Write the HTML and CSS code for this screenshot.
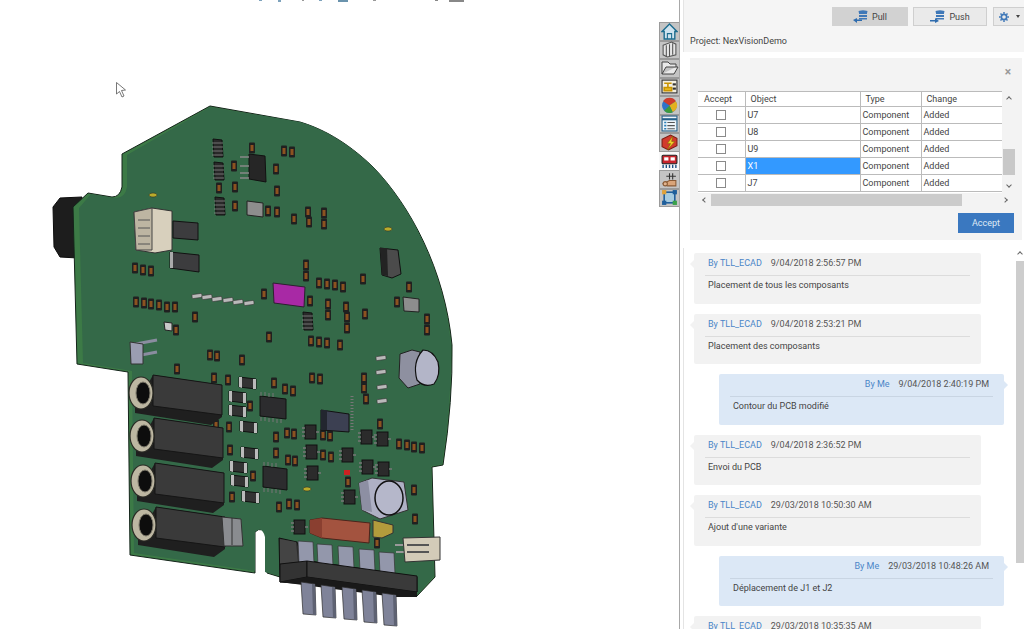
FILE: index.html
```html
<!DOCTYPE html>
<html lang="en">
<head>
    <meta charset="UTF-8">
    <title>NexVision PCB collaboration</title>
    <link rel="stylesheet" href="styles.css">
</head>
<body>
    <div class="viewport">
        <svg class="pcb" viewBox="0 0 659 629" width="659" height="629">
            <defs>
                <g id="r"><rect x="-3" y="-5.5" width="6" height="11" rx="1" fill="#202020"/><rect x="-1.5" y="-3" width="3" height="6" fill="#8c5220"/></g>
                <g id="g"><rect x="-5" y="-2" width="10" height="4" rx="1" transform="rotate(-8)" fill="#b9b9b9" stroke="#333" stroke-width=".6"/></g>
                <g id="s"><polygon points="-8,-6 9,-4 9,6 -8,4" fill="#333" stroke="#111"/><polygon points="-8,-6 -5,-6 -5,5 -8,4" fill="#bbb"/><polygon points="6,-4 9,-4 9,6 6,6" fill="#bbb"/></g>
                <g id="t"><rect x="-6" y="-7" width="11" height="14" fill="#2b2b2b" stroke="#111"/><path d="M-9,-4h3M-9,0h3M-9,4h3M5,0h3" stroke="#777" stroke-width="1.5"/></g>
                <g id="p"><polygon points="-5,-9 4,-8 5,9 -4,9" fill="#292929" stroke="#111"/><path d="M-6,-5h11M-6,-1h11M-6,3h11M-6,7h11" stroke="#888" stroke-width=".8"/></g>
                <g id="jack">
                    <polygon points="-6,14 12,-18 81,-8 81,24 70,32 -6,20" fill="#1f1f1f"/>
                    <polygon points="12,-18 81,-8 81,22 12,13" fill="#3a3a3a" stroke="#151515"/>
                    <ellipse rx="12" ry="16" fill="#bdb7a2" stroke="#2a2a24" stroke-width="1.2"/>
                    <ellipse cx="2" rx="7" ry="11" fill="#0d0d0d" stroke="#7a7668"/>
                </g>
                <g id="up"><polygon points="0,0 15,1 16,22 1,22" fill="#9397ab" stroke="#333" stroke-width=".7"/></g>
                <g id="down"><polygon points="0,0 14,2 15,33 2,32" fill="#7f8399" stroke="#2c2c2c" stroke-width=".7"/><polygon points="11,2 14,2 15,33 12,33" fill="#5e6273"/></g>
            </defs>

            <!-- toolbar remains at the top edge -->
            <g fill="#7ea3bd">
                <rect x="259" y="0" width="3" height="1"/><rect x="278" y="0" width="3" height="2"/><rect x="302" y="0" width="2" height="1" fill="#999"/>
                <rect x="319" y="0" width="3" height="1"/><rect x="338" y="0" width="10" height="2" fill="#6a93ad"/><rect x="373" y="0" width="3" height="1" fill="#999"/>
                <rect x="435" y="0" width="3" height="1" fill="#888"/><rect x="449" y="0" width="15" height="2" fill="#888"/>
            </g>

            <!-- cursor -->
            <path d="M116.5,82.5 V94 L119.5,91.5 L122,97 L124,96 L121.5,90.5 L125.5,90 Z" fill="#fff" stroke="#555" stroke-width=".8"/>

            <!-- cable gland behind the board -->
            <polygon points="53,207 60,198 82,197 78,258 60,257 54,247" fill="#1d1d1d" stroke="#0c0c0c"/>

            <!-- board edge and face -->
            <path d="M210,106 L122,154 V187 Q120,197 112,197 L88,193 L73,207 L77,364 L128,372 L130,555 L255,573 V532 Q262,525 267,537 V573 L280,577 L417,596 L435,577 L432,467 L443,465 Q453,400 452,345 C445,270 410,205 373,167 C345,140 320,128 300,122 Z" fill="#3c7a46" stroke="#14241a"/>
            <path d="M210,107 L127,155 V187 Q125,199 114,198 L91,194 L79,208 L83,363 L132,371 L134,553 L255,571 V532 Q262,525 265,537 V572 L280,576 L417,595 L434,576 L431,466 L442,464 Q452,400 451,345 C444,270 410,205 373,167 C345,140 320,128 300,122 Z" fill="#346948"/>

            <!-- top half parts -->
            <use href="#p" x="218" y="148"/><use href="#p" x="219" y="171"/><use href="#p" x="220" y="206"/><use href="#p" x="308" y="321"/>
            <polygon points="249,154 265,156 266,182 249,179" fill="#262626" stroke="#111"/>
            <path d="M240,157h9M240,166h9M240,173h9M240,178h9" stroke="#888" stroke-width="1.5"/>
            <polygon points="247,201 263,203 263,217 247,215" fill="#8d8d8d" stroke="#222"/>
            <polygon points="403,297 419,299 419,312 404,311" fill="#8d8d8d" stroke="#222"/>

            <polygon points="134,212 152,208 172,211 172,250 155,253 136,250" fill="#d8d0bd" stroke="#333"/>
            <polygon points="134,212 152,208 152,250 136,250" fill="#bdb5a2" stroke="#444"/>
            <path d="M138,220h12M138,228h12M138,236h12M138,244h12" stroke="#555"/>
            <polygon points="173,221 198,223 198,240 173,238" fill="#3c3c3e" stroke="#111"/>
            <polygon points="170,252 199,255 199,272 170,268" fill="#3c3c3e" stroke="#111"/>
            <rect x="170" y="252" width="3" height="16" fill="#aaa"/>

            <polygon points="273,283 305,287 304,307 274,303" fill="#a829a5" stroke="#2d2030"/>
            <polygon points="380,248 398,250 401,274 392,278 382,275" fill="#4b4b4b" stroke="#111"/>
            <polygon points="380,248 387,248 388,276 382,275" fill="#232323"/>

            <path d="M136,344 L157,340 M136,356 L157,352" stroke="#8a8da0" stroke-width="3"/>
            <polygon points="130,342 143,344 143,364 131,364" fill="#9a9db2" stroke="#333"/>
            <polygon points="164,322 172,323 172,331 165,330" fill="#c8c8c8" stroke="#222"/>

            <ellipse cx="153" cy="195" rx="4" ry="2" fill="#b9ab2b" stroke="#222" stroke-width=".5"/>
            <ellipse cx="388" cy="229" rx="4" ry="2" fill="#b9ab2b" stroke="#222" stroke-width=".5"/>
            <ellipse cx="307" cy="489" rx="4" ry="2" fill="#b9ab2b" stroke="#222" stroke-width=".5"/>

            <g>
                <use href="#g" x="197" y="296"/><use href="#g" x="207" y="297"/><use href="#g" x="217" y="299"/><use href="#g" x="228" y="300"/><use href="#g" x="238" y="302"/><use href="#g" x="249" y="303"/>
                <use href="#g" x="381" y="358"/><use href="#g" x="381" y="372"/><use href="#g" x="382" y="387"/><use href="#g" x="382" y="401"/>
            </g>

            <g>
                <use href="#r" x="135" y="268"/><use href="#r" x="143" y="270"/><use href="#r" x="151" y="271"/>
                <use href="#r" x="136" y="302"/><use href="#r" x="144" y="303"/><use href="#r" x="151" y="304"/><use href="#r" x="159" y="305"/><use href="#r" x="167" y="307"/><use href="#r" x="175" y="307"/>
                <use href="#r" x="195" y="317"/><use href="#r" x="176" y="330"/><use href="#r" x="210" y="355"/><use href="#r" x="217" y="356"/><use href="#r" x="242" y="360"/><use href="#r" x="177" y="369"/>
                <use href="#r" x="252" y="148"/><use href="#r" x="284" y="151"/><use href="#r" x="292" y="152"/><use href="#r" x="234" y="166"/><use href="#r" x="276" y="169"/><use href="#r" x="235" y="187"/><use href="#r" x="219" y="188"/><use href="#r" x="277" y="191"/><use href="#r" x="235" y="206"/><use href="#r" x="268" y="211"/><use href="#r" x="277" y="212"/>
                <use href="#r" x="308" y="212"/><use href="#r" x="324" y="213"/><use href="#r" x="294" y="219"/><use href="#r" x="309" y="222"/><use href="#r" x="324" y="224"/>
                <use href="#r" x="306" y="265"/><use href="#r" x="306" y="276"/><use href="#r" x="319" y="283"/><use href="#r" x="327" y="284"/><use href="#r" x="335" y="285"/><use href="#r" x="343" y="287"/><use href="#r" x="363" y="279"/><use href="#r" x="409" y="287"/><use href="#r" x="264" y="294"/><use href="#r" x="310" y="301"/>
                <use href="#r" x="328" y="304"/><use href="#r" x="346" y="307"/><use href="#r" x="328" y="315"/><use href="#r" x="347" y="317"/><use href="#r" x="365" y="314"/><use href="#r" x="347" y="328"/><use href="#r" x="397" y="302"/><use href="#r" x="427" y="319"/><use href="#r" x="427" y="330"/><use href="#r" x="269" y="337"/>
                <use href="#r" x="311" y="341"/><use href="#r" x="319" y="342"/><use href="#r" x="327" y="343"/><use href="#r" x="340" y="345"/>
                <use href="#r" x="214" y="378"/><use href="#r" x="228" y="380"/><use href="#r" x="312" y="378"/><use href="#r" x="320" y="379"/><use href="#r" x="364" y="378"/><use href="#r" x="364" y="388"/><use href="#r" x="366" y="399"/><use href="#r" x="274" y="383"/><use href="#r" x="285" y="389"/><use href="#r" x="293" y="391"/>
                <use href="#r" x="250" y="406"/><use href="#r" x="216" y="425"/><use href="#r" x="229" y="427"/><use href="#r" x="287" y="433"/><use href="#r" x="294" y="434"/><use href="#r" x="276" y="437"/><use href="#r" x="323" y="435"/><use href="#r" x="330" y="436"/><use href="#r" x="380" y="424"/>
                <use href="#r" x="399" y="444"/><use href="#r" x="407" y="445"/><use href="#r" x="414" y="447"/><use href="#r" x="422" y="448"/><use href="#r" x="230" y="450"/><use href="#r" x="276" y="453"/><use href="#r" x="288" y="460"/><use href="#r" x="295" y="461"/><use href="#r" x="323" y="455"/><use href="#r" x="331" y="457"/>
                <use href="#r" x="253" y="476"/><use href="#r" x="232" y="497"/><use href="#r" x="289" y="504"/><use href="#r" x="297" y="505"/><use href="#r" x="279" y="507"/><use href="#r" x="348" y="482"/><use href="#r" x="414" y="490"/><use href="#r" x="415" y="519"/><use href="#r" x="377" y="543"/>
            </g>

            <!-- electrolytic cap -->
            <polygon points="400,354 412,350 420,352 420,384 408,388 399,378" fill="#8e90a0" stroke="#222"/>
            <path d="M423,350 Q433,350 438,362 Q441,375 434,384 Q424,388 417,380 Q412,362 423,350 Z" fill="#b3b5c8" stroke="#111" stroke-width="1.2"/>

            <!-- lower half parts -->
            <use href="#s" x="247" y="383"/><use href="#s" x="237" y="397"/><use href="#s" x="237" y="411"/><use href="#s" x="248" y="427"/>
            <use href="#s" x="249" y="453"/><use href="#s" x="238" y="467"/><use href="#s" x="239" y="481"/><use href="#s" x="250" y="497"/>

            <g>
                <polygon points="260,396 286,399 286,419 260,416" fill="#2c2c2e" stroke="#111"/>
                <path d="M261,392v4M265,392v4M269,393v4M273,393v4M261,417v4M265,417v4M269,418v4M273,418v4M277,419v4M281,419v4" stroke="#777"/>
                <polygon points="263,466 287,469 287,490 263,487" fill="#2c2c2e" stroke="#111"/>
                <path d="M264,462v4M268,462v4M272,463v4M276,463v4M264,488v4M268,488v4M272,489v4M276,489v4M280,490v4" stroke="#777"/>
                <polygon points="321,410 349,414 349,432 321,430" fill="#3c4052" stroke="#111"/>
                <polygon points="321,410 327,410 327,430 321,430" fill="#23262f"/>
                <path d="M352,396v34" stroke="#777" stroke-width="3" stroke-dasharray="1 2"/>
            </g>
            <use href="#t" x="311" y="432"/><use href="#t" x="312" y="452"/><use href="#t" x="313" y="473"/><use href="#t" x="348" y="455"/>
            <use href="#t" x="367" y="437"/><use href="#t" x="383" y="439"/><use href="#t" x="368" y="467"/><use href="#t" x="384" y="469"/><use href="#t" x="350" y="497"/><use href="#t" x="300" y="527"/>

            <use href="#jack" x="141" y="393"/><use href="#jack" x="142" y="436"/><use href="#jack" x="143" y="481"/><use href="#jack" x="144" y="525"/>

            <polygon points="222,517 241,519 243,546 224,546" fill="#8a8c90" stroke="#333"/>
            <path d="M232,518v27" stroke="#333"/>

            <rect x="344" y="470" width="6" height="5" fill="#c22"/>
            <polygon points="359,483 372,478 404,482 408,510 380,519 362,510" fill="#aeb0c4" stroke="#333"/>
            <polygon points="359,483 368,480 372,512 362,510" fill="#8d8fa3"/>
            <ellipse cx="389" cy="498" rx="14" ry="17" fill="#b5b7ca" stroke="#111" stroke-width="1.5"/>

            <polygon points="373,520 393,525 393,533 382,538 373,537" fill="#b39b3c" stroke="#333"/>
            <polygon points="310,520 322,518 370,523 369,543 322,538 310,533" fill="#a3533f" stroke="#4b241b"/>
            <polygon points="310,520 322,518 322,538 310,533" fill="#8a3f30"/>

            <path d="M395,545h8M396,552h8" stroke="#999" stroke-width="2"/>
            <polygon points="403,538 440,537 440,560 405,562" fill="#d3cbb8" stroke="#333"/>
            <path d="M407,545h22M407,552h22" stroke="#555" stroke-width="2"/>

            <polygon points="279,538 297,542 303,560 417,577 417,592 280,582" fill="#2b2b2b" stroke="#111"/>
            <use href="#up" x="298" y="541"/><use href="#up" x="317" y="544"/><use href="#up" x="338" y="546"/><use href="#up" x="359" y="549"/><use href="#up" x="379" y="552"/>
            <polygon points="280,539 296,542 298,562 280,564" fill="#444"/>
            <polygon points="280,564 307,561 307,577 280,582" fill="#333" stroke="#111"/>
            <polygon points="307,561 417,576 417,592 307,577" fill="#3a3a3a" stroke="#111"/>
            <polygon points="280,582 307,577 417,592 417,597 395,597" fill="#191919"/>
            <use href="#down" x="301" y="582"/><use href="#down" x="321" y="585"/><use href="#down" x="342" y="587"/><use href="#down" x="362" y="590"/><use href="#down" x="382" y="593"/>
        </svg>
    </div>

    <div class="tabs">
        <div class="tab"><svg viewBox="0 0 16 16" width="17" height="17"><path d="M1,8 L8,1 L15,8 H13 V15 H3 V8 Z" fill="#cfe3ee" stroke="#1c6c8e" stroke-width="1.3"/><path d="M6,15 V10 H10 V15" fill="none" stroke="#1c6c8e"/></svg></div>
        <div class="tab"><svg viewBox="0 0 16 16" width="17" height="17"><path d="M2,4 L10,1 L14,3 V13 L6,15 L2,13 Z" fill="#e6e6e6" stroke="#555"/><path d="M5,4 V15 M8,3 V14 M11,2 V13" stroke="#555"/></svg></div>
        <div class="tab"><svg viewBox="0 0 18 16" width="18" height="16"><path d="M1,14 V2 H7 L9,4 H15 V7 M1,14 H13 L17,7 H5 Z" fill="#e9e9e9" stroke="#444"/></svg></div>
        <div class="tab"><svg viewBox="0 0 16 16" width="17" height="17"><rect x="1" y="2" width="14" height="12" fill="#f3efe0" stroke="#333"/><path d="M3,5 H10 M6.5,5 V9 M3,9 H10 V12 H3 Z" stroke="#c99400" stroke-width="1.5" fill="#e6b820"/><rect x="11" y="5" width="3" height="2" fill="#333"/><rect x="11" y="9" width="3" height="2" fill="#333"/></svg></div>
        <div class="tab"><svg viewBox="0 0 16 16" width="17" height="17"><circle cx="8" cy="8" r="7" fill="#2f73c9"/><path d="M8,8 L2,4 A7,7 0 0 1 14,4 Z" fill="#cf3b2b"/><path d="M8,8 L14,4 A7,7 0 0 1 11,14.3 Z" fill="#e3b11f"/><path d="M8,8 L11,14.3 A7,7 0 0 1 3,13 Z" fill="#3c9b3c"/></svg></div>
        <div class="tab"><svg viewBox="0 0 16 16" width="17" height="17"><rect x="1" y="1" width="14" height="14" fill="#eef4f9" stroke="#25618a"/><path d="M1,4 H15" stroke="#25618a" stroke-width="2"/><path d="M6,7 H13 M6,10 H13 M6,13 H13" stroke="#555"/><path d="M3,7 H5 M3,10 H5 M3,13 H5" stroke="#2a7fb8" stroke-width="1.5"/></svg></div>
        <div class="tab"><svg viewBox="0 0 16 16" width="17" height="17"><path d="M1,5 L9,1 L15,4 V11 L7,15 L1,12 Z" fill="#d23a2c" stroke="#7d1d14"/><path d="M11,2 L6,9 H9 L6,15 L13,7 H10 Z" fill="#f1cf2a" stroke="#7a6200" stroke-width=".5"/></svg></div>
        <div class="tab tab-active"><svg viewBox="0 0 16 16" width="17" height="17"><rect x="1" y="3" width="14" height="8" rx="1" fill="#c8242c" stroke="#222"/><rect x="3" y="5" width="4" height="3" fill="#fff"/><rect x="9" y="5" width="4" height="3" fill="#fff"/><path d="M2,12 V15 M5,12 V15 M8,12 V15 M11,12 V15 M14,12 V15" stroke="#1c4f82" stroke-width="1.3"/></svg></div>
        <div class="tab"><svg viewBox="0 0 16 16" width="17" height="17"><path d="M2,12 L8,9 H14 V14 H6 Z" fill="#d9a479" stroke="#8a5b36"/><path d="M5,5 H14 M8,2 V8 M11,2 V8" stroke="#333"/><circle cx="4" cy="12" r="2" fill="#e2b48e" stroke="#8a5b36"/></svg></div>
        <div class="tab"><svg viewBox="0 0 16 16" width="17" height="17"><rect x="3" y="3" width="10" height="10" fill="#a6cbe0" stroke="#1f5f9c" stroke-width="1.5"/><rect x="1" y="1" width="4" height="4" fill="#e0a23a"/><rect x="11" y="11" width="4" height="4" fill="#3aa14a"/><rect x="1" y="11" width="4" height="4" fill="#1f5f9c"/><rect x="11" y="1" width="4" height="4" fill="#1f5f9c"/></svg></div>
    </div>

    <div class="panel">
        <div class="panel-head">
            <div class="toolbar">
                <button class="tool-btn pull">
                    <svg viewBox="0 0 16 13" width="16" height="13"><path d="M6,1.5 h8 v8 h-8 z" fill="#3f78b8"/><ellipse cx="10" cy="1.7" rx="4.5" ry="1.5" fill="#3f78b8"/><path d="M5.5,4.5 h9 M5.5,7.5 h9" stroke="#d0d0d0"/><path d="M0,10 H5 V8 L9,11 L5,13 V11.5 H0 Z" fill="#2f6cae" transform="rotate(180 4.5 10.5)"/></svg>
                    Pull
                </button>
                <button class="tool-btn push">
                    <svg viewBox="0 0 16 13" width="16" height="13"><path d="M6,1.5 h8 v8 h-8 z" fill="#3f78b8"/><ellipse cx="10" cy="1.7" rx="4.5" ry="1.5" fill="#3f78b8"/><path d="M5.5,4.5 h9 M5.5,7.5 h9" stroke="#e8e8e8"/><path d="M0,10 H5 V8 L9,11 L5,13 V11.5 H0 Z" fill="#2f6cae"/></svg>
                    Push
                </button>
                <button class="tool-btn gear">
                    <svg viewBox="0 0 12 12" width="10" height="10"><circle cx="6" cy="6" r="3.2" fill="none" stroke="#3f78b8" stroke-width="2"/><path d="M6,0 V2 M6,10 V12 M0,6 H2 M10,6 H12 M1.8,1.8 L3.2,3.2 M8.8,8.8 L10.2,10.2 M1.8,10.2 L3.2,8.8 M8.8,3.2 L10.2,1.8" stroke="#3f78b8" stroke-width="1.8"/></svg>
                    <span class="caret"></span>
                </button>
            </div>
            <div class="project">Project: NexVisionDemo</div>
        </div>

        <div class="changes">
            <div class="close-row"><span class="close">×</span></div>
            <div class="grid-wrap">
                <div class="grid-main">
                    <table class="grid">
                        <thead>
                            <tr><th class="c-accept">Accept</th><th class="c-object">Object</th><th class="c-type">Type</th><th class="c-change">Change</th></tr>
                        </thead>
                        <tbody>
                            <tr><td class="center"><span class="check"></span></td><td>U7</td><td>Component</td><td>Added</td></tr>
                            <tr><td class="center"><span class="check"></span></td><td>U8</td><td>Component</td><td>Added</td></tr>
                            <tr><td class="center"><span class="check"></span></td><td>U9</td><td>Component</td><td>Added</td></tr>
                            <tr><td class="center"><span class="check"></span></td><td class="selected">X1</td><td>Component</td><td>Added</td></tr>
                            <tr><td class="center"><span class="check"></span></td><td>J7</td><td>Component</td><td>Added</td></tr>
                        </tbody>
                    </table>
                </div>
                <div class="vbar">
                    <span class="arrow arrow-up"></span>
                    <span class="vthumb"></span>
                    <span class="arrow arrow-down"></span>
                </div>
            </div>
            <div class="hbar">
                <span class="arrow arrow-left"></span>
                <span class="hthumb"></span>
                <span class="arrow arrow-right"></span>
            </div>
            <div class="accept-row"><button class="accept-btn">Accept</button></div>
        </div>

        <div class="history">
            <div class="messages">
                <div class="msg">
                    <div class="msg-head"><span class="by">By TLL_ECAD</span><span>9/04/2018 2:56:57 PM</span></div>
                    <div class="msg-text">Placement de tous les composants</div>
                </div>
                <div class="msg">
                    <div class="msg-head"><span class="by">By TLL_ECAD</span><span>9/04/2018 2:53:21 PM</span></div>
                    <div class="msg-text">Placement des composants</div>
                </div>
                <div class="msg mine">
                    <div class="msg-head"><span class="by">By Me</span><span>9/04/2018 2:40:19 PM</span></div>
                    <div class="msg-text">Contour du PCB modifié</div>
                </div>
                <div class="msg">
                    <div class="msg-head"><span class="by">By TLL_ECAD</span><span>9/04/2018 2:36:52 PM</span></div>
                    <div class="msg-text">Envoi du PCB</div>
                </div>
                <div class="msg">
                    <div class="msg-head"><span class="by">By TLL_ECAD</span><span>29/03/2018 10:50:30 AM</span></div>
                    <div class="msg-text">Ajout d'une variante</div>
                </div>
                <div class="msg mine">
                    <div class="msg-head"><span class="by">By Me</span><span>29/03/2018 10:48:26 AM</span></div>
                    <div class="msg-text">Déplacement de J1 et J2</div>
                </div>
                <div class="msg">
                    <div class="msg-head"><span class="by">By TLL_ECAD</span><span>29/03/2018 10:35:35 AM</span></div>
                </div>
            </div>
            <div class="list-bar">
                <span class="arrow arrow-up"></span>
                <span class="list-thumb"></span>
            </div>
        </div>
    </div>
</body>
</html>
```

FILE: styles.css
```css
html, body {
    margin: 0;
    padding: 0;
    height: 629px;
    overflow: hidden;
}

body {
    display: flex;
    font-family: Roboto, "Liberation Sans", sans-serif;
    font-size: 9px;
    color: #444;
    background-color: #ffffff;
}

.viewport {
    width: 659px;
    height: 629px;
    flex: none;
}

.pcb {
    display: block;
}

/* Side tabs */
.tabs {
    width: 20px;
    flex: none;
    padding-top: 22px;
    display: flex;
    flex-direction: column;
}

.tab {
    height: 18.5px;
    box-sizing: border-box;
    background-color: #c4c4c4;
    border: 1px solid #9a9a9a;
    border-right: none;
    display: flex;
    align-items: center;
    justify-content: center;
}

.tab-active {
    background-color: #f8f8f8;
    border-color: #f8f8f8;
}

/* Right panel */
.panel {
    flex: 1;
    min-width: 0;
    height: 629px;
    box-sizing: border-box;
    border-left: 1px solid #a8a8a8;
    padding-left: 3px;
    display: flex;
    flex-direction: column;
}

.panel-head {
    height: 52px;
    flex: none;
    box-sizing: border-box;
    background-color: #f5f5f5;
    border-left: 1px solid #e4e4e4;
    padding: 7px 0 0 6px;
}

.toolbar {
    display: flex;
    justify-content: flex-end;
    gap: 5px;
}

.tool-btn {
    height: 19px;
    box-sizing: border-box;
    border: 1px solid #cfcfcf;
    background-color: #eaeaea;
    font-family: inherit;
    font-size: 9px;
    color: #444;
    display: flex;
    align-items: center;
    justify-content: center;
    gap: 3px;
    padding: 0;
}

.pull {
    width: 76px;
    background-color: #d2d2d2;
    border-color: #d2d2d2;
}

.push {
    width: 74px;
    margin-right: 1px;
}

.gear {
    width: 31px;
    border-right: none;
    gap: 7px;
}

.caret {
    width: 0;
    height: 0;
    border-left: 2.5px solid transparent;
    border-right: 2.5px solid transparent;
    border-top: 3px solid #444;
}

.project {
    margin-top: 9px;
    line-height: 12px;
}

/* Pending changes card */
.changes {
    flex: none;
    height: 182px;
    box-sizing: border-box;
    margin: 6px 2px 8px 7px;
    padding: 0 8px;
    background-color: #f3f3f3;
}

.close-row {
    height: 33px;
    display: flex;
    justify-content: flex-end;
    padding: 7px 3px 0 0;
    box-sizing: border-box;
}

.close {
    font-size: 12px;
    line-height: 15px;
    font-weight: 700;
    color: #999;
}

.grid-wrap {
    display: flex;
    height: 102px;
}

.grid-main {
    width: 304px;
    height: 102px;
    flex: none;
    overflow: hidden;
    background-color: #ffffff;
}

.grid {
    width: 305px;
    table-layout: fixed;
    border-collapse: collapse;
    font-size: 9px;
    color: #444;
}

.grid th {
    height: 15px;
    padding: 0 0 1px;
    font-weight: 400;
    text-align: left;
    border-top: 1px solid #bbb;
    border-bottom: 1px solid #bbb;
    border-right: 1px solid #bbb;
    box-sizing: border-box;
}

.grid td {
    height: 17px;
    padding: 0 0 0 2px;
    border-bottom: 1px solid #bbb;
    border-right: 1px solid #bbb;
    box-sizing: border-box;
    line-height: 1;
}

.c-accept { width: 47px; text-indent: 6px; }
.c-object { width: 115px; text-indent: 5px; }
.c-type { width: 61px; text-indent: 5px; }
.c-change { text-indent: 5px; }

.grid td.center {
    padding: 0;
    text-align: center;
}

.grid td.selected {
    background-color: #3399ff;
    color: #ffffff;
}

.check {
    display: inline-block;
    width: 10px;
    height: 10px;
    box-sizing: border-box;
    border: 1px solid #8a8a8a;
    background-color: #ffffff;
    vertical-align: middle;
}

/* Scrollbars */
.arrow {
    display: block;
    width: 4px;
    height: 4px;
    box-sizing: border-box;
    border: solid #666;
    border-width: 1px 0 0 1px;
}

.arrow-up { transform: rotate(45deg); }
.arrow-down { transform: rotate(225deg); }
.arrow-left { transform: rotate(-45deg); }
.arrow-right { transform: rotate(135deg); }

.vbar {
    width: 12px;
    margin-left: 1px;
    display: flex;
    flex-direction: column;
    align-items: center;
    padding-top: 6px;
    box-sizing: border-box;
}

.vthumb {
    width: 12px;
    height: 26px;
    margin-top: 48px;
    background-color: #c8c8c8;
}

.vbar .arrow-down {
    margin-top: 8px;
}

.hbar {
    width: 317px;
    height: 12px;
    margin-top: 1px;
    display: flex;
    align-items: center;
    padding-left: 5px;
    box-sizing: border-box;
}

.hthumb {
    width: 251px;
    height: 12px;
    margin-left: 4px;
    margin-right: 41px;
    background-color: #cbcbcb;
}

.accept-row {
    display: flex;
    justify-content: flex-end;
    margin-top: 7px;
}

.accept-btn {
    width: 56px;
    height: 20px;
    border: none;
    background-color: #3a78c0;
    color: #dfe9f5;
    font-family: inherit;
    font-size: 9px;
    padding: 0;
}

/* Message history */
.history {
    flex: 1;
    min-height: 0;
    display: flex;
    overflow: hidden;
    border-left: 1px solid #e4e4e4;
}

.messages {
    flex: 1;
    min-width: 0;
    padding: 5px 0 0 10px;
    display: flex;
    flex-direction: column;
    gap: 10px;
}

.msg {
    position: relative;
    width: 287px;
    height: 50.5px;
    flex: none;
    box-sizing: border-box;
    background-color: #f2f2f2;
    border-radius: 2px;
    padding: 5px 11px 0 11px;
}

.msg::before {
    content: "";
    position: absolute;
    left: -4px;
    top: 7px;
    border-top: 4px solid transparent;
    border-bottom: 4px solid transparent;
    border-right: 4px solid #f2f2f2;
}

.msg.mine {
    width: 285px;
    margin-left: 25px;
    background-color: #dce8f6;
}

.msg.mine::before {
    left: auto;
    right: -4px;
    border-right: none;
    border-left: 4px solid #dce8f6;
}

.msg-head {
    display: flex;
    gap: 9px;
    height: 17px;
    line-height: 11px;
    padding-left: 3px;
    border-bottom: 1px solid #dcdcdc;
    color: #555;
}

.mine .msg-head {
    justify-content: flex-end;
    padding: 0 4px 0 0;
    border-bottom-color: #c9d5e3;
}

.by {
    color: #4a86c8;
}

.msg-text {
    margin-top: 3px;
    padding-left: 3px;
    line-height: 13px;
}

.list-bar {
    width: 8px;
    flex: none;
    display: flex;
    flex-direction: column;
    align-items: center;
    padding-top: 4px;
    box-sizing: border-box;
}

.list-thumb {
    width: 8px;
    height: 302px;
    margin-top: 5px;
    background-color: #cdcdcd;
}
```
